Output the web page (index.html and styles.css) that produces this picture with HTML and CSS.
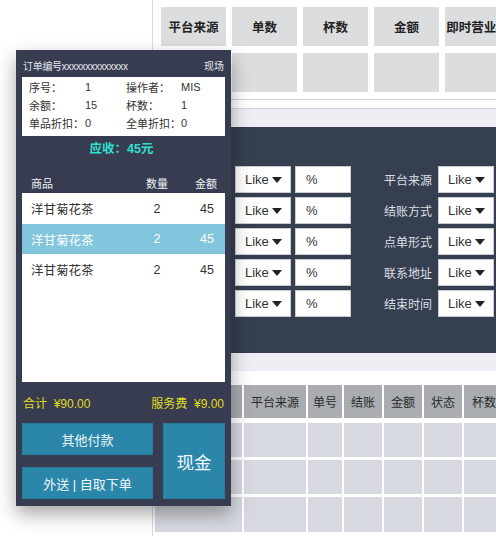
FILE: index.html
```html
<!DOCTYPE html>
<html lang="zh">
<head>
<meta charset="utf-8">
<title>收银</title>
<link rel="stylesheet" href="styles.css">
</head>
<body>
<div class="stage">
  <div class="app">
    <div class="top-table">
      <div class="th">平台来源</div>
      <div class="th">单数</div>
      <div class="th">杯数</div>
      <div class="th">金额</div>
      <div class="th">即时营业额</div>
      <div class="td"></div>
      <div class="td"></div>
      <div class="td"></div>
      <div class="td"></div>
      <div class="td"></div>
    </div>
    <div class="sep"></div>
    <div class="band"></div>
    <div class="filter">
      <div class="frow">
        <div class="sel">Like<span class="tri"></span></div>
        <div class="inp">%</div>
        <div class="flabel">平台来源</div>
        <div class="sel">Like<span class="tri"></span></div>
      </div>
      <div class="frow">
        <div class="sel">Like<span class="tri"></span></div>
        <div class="inp">%</div>
        <div class="flabel">结账方式</div>
        <div class="sel">Like<span class="tri"></span></div>
      </div>
      <div class="frow">
        <div class="sel">Like<span class="tri"></span></div>
        <div class="inp">%</div>
        <div class="flabel">点单形式</div>
        <div class="sel">Like<span class="tri"></span></div>
      </div>
      <div class="frow">
        <div class="sel">Like<span class="tri"></span></div>
        <div class="inp">%</div>
        <div class="flabel">联系地址</div>
        <div class="sel">Like<span class="tri"></span></div>
      </div>
      <div class="frow">
        <div class="sel">Like<span class="tri"></span></div>
        <div class="inp">%</div>
        <div class="flabel">结束时间</div>
        <div class="sel">Like<span class="tri"></span></div>
      </div>
    </div>
    <div class="band2"></div>
    <div class="bottom-table">
      <div class="bh"></div>
      <div class="bh">平台来源</div>
      <div class="bh">单号</div>
      <div class="bh">结账</div>
      <div class="bh">金额</div>
      <div class="bh">状态</div>
      <div class="bh">杯数</div>
      <div class="bd"></div><div class="bd"></div><div class="bd"></div><div class="bd"></div><div class="bd"></div><div class="bd"></div><div class="bd"></div>
      <div class="bd"></div><div class="bd"></div><div class="bd"></div><div class="bd"></div><div class="bd"></div><div class="bd"></div><div class="bd"></div>
      <div class="bd"></div><div class="bd"></div><div class="bd"></div><div class="bd"></div><div class="bd"></div><div class="bd"></div><div class="bd"></div>
    </div>
  </div>

  <div class="receipt">
    <div class="r-head">
      <span>订单编号xxxxxxxxxxxxxx</span>
      <span>现场</span>
    </div>
    <div class="info">
      <span>序号：</span><span>1</span><span>操作者：</span><span>MIS</span>
      <span>余额：</span><span>15</span><span>杯数：</span><span>1</span>
      <span>单品折扣：</span><span>0</span><span>全单折扣：</span><span>0</span>
    </div>
    <div class="due">应收：45元</div>
    <div class="list-head">
      <span class="c-name">商品</span>
      <span class="c-qty">数量</span>
      <span class="c-amt">金额</span>
    </div>
    <div class="list">
      <div class="item">
        <span class="c-name">洋甘菊花茶</span>
        <span class="c-qty">2</span>
        <span class="c-amt">45</span>
      </div>
      <div class="item active">
        <span class="c-name">洋甘菊花茶</span>
        <span class="c-qty">2</span>
        <span class="c-amt">45</span>
      </div>
      <div class="item">
        <span class="c-name">洋甘菊花茶</span>
        <span class="c-qty">2</span>
        <span class="c-amt">45</span>
      </div>
    </div>
    <div class="totals">
      <span>合计&nbsp;&nbsp;¥90.00</span>
      <span>服务费&nbsp;&nbsp;¥9.00</span>
    </div>
    <div class="actions">
      <div class="btn-col">
        <div class="btn">其他付款</div>
        <div class="btn">外送 | 自取下单</div>
      </div>
      <div class="btn cash">现金</div>
    </div>
  </div>
</div>
</body>
</html>
```
FILE: styles.css
```css
* { box-sizing: border-box; }
html, body {
  margin: 0;
  padding: 0;
  background: #ffffff;
}
body {
  width: 496px;
  height: 536px;
  overflow: hidden;
  font-family: "Liberation Sans", "Noto Sans CJK SC", sans-serif;
}
.stage {
  position: relative;
  width: 496px;
  height: 536px;
  overflow: hidden;
}

/* background window */
.app {
  margin-left: 152px;
  width: 360px;
  height: 536px;
  border-left: 1px solid #d9d9d9;
  background: #fff;
}
.top-table {
  display: grid;
  grid-template-columns: repeat(5, 65px);
  grid-template-rows: 39px 39px;
  column-gap: 6px;
  row-gap: 7px;
  padding: 7px 0 0 8px;
}
.th, .td {
  background: #dcdddf;
}
.th {
  display: flex;
  align-items: center;
  justify-content: center;
  font-size: 12.5px;
  font-weight: bold;
  color: #222;
  white-space: nowrap;
  overflow: hidden;
}
.sep {
  margin-top: 7px;
  height: 10px;
  border-top: 1px solid #d2d2d2;
  border-bottom: 1px solid #d4d4da;
}
.band {
  height: 18px;
  background: #eeeef4;
}
.filter {
  background: #363f4f;
  padding: 39px 0 36px 82px;
  display: flex;
  flex-direction: column;
  gap: 4px;
}
.frow {
  display: flex;
  align-items: center;
  height: 27px;
}
.sel, .inp {
  height: 27px;
  background: #fff;
  border: 1px solid #c9cbd0;
  display: flex;
  align-items: center;
  font-size: 13px;
  color: #333;
}
.sel {
  width: 56px;
  padding-left: 9px;
}
.inp {
  width: 56px;
  margin-left: 4px;
  padding-left: 10px;
}
.tri {
  display: inline-block;
  margin-left: 3px;
  width: 0;
  height: 0;
  border-left: 5px solid transparent;
  border-right: 5px solid transparent;
  border-top: 6px solid #222;
}
.flabel {
  width: 81px;
  margin-right: 6px;
  text-align: right;
  font-size: 12px;
  color: #dcdfe4;
}
.band2 {
  height: 18px;
  background: #eeeef4;
  margin-bottom: 14px;
}
.bottom-table {
  display: grid;
  grid-template-columns: 87px 62px 34px 38px 38px 38px 40px;
  grid-template-rows: 35px 34px 34px 35px;
  column-gap: 2px;
  row-gap: 3px;
  padding-left: 2px;
}
.bh {
  background: #a9adb2;
  display: flex;
  align-items: center;
  justify-content: center;
  font-size: 12px;
  color: #2a2a2a;
  margin-bottom: 2px;
  white-space: nowrap;
}
.bd {
  background: #d6d9df;
}

/* receipt overlay */
.receipt {
  position: absolute;
  left: 16px;
  top: 50px;
  width: 215px;
  height: 456px;
  background: #383c50;
  box-shadow: 0 8px 18px rgba(0, 0, 0, 0.35);
  display: flex;
  flex-direction: column;
  padding: 0 6px;
}
.r-head {
  height: 27px;
  display: flex;
  justify-content: space-between;
  align-items: flex-end;
  padding: 0 1px 3px 1px;
  font-size: 10px;
  line-height: 14px;
  color: #e6e8ee;
}
.r-head span:first-child {
  letter-spacing: -0.3px;
}
.info {
  background: #fff;
  height: 59px;
  padding: 1px 0 0 7px;
  display: grid;
  grid-template-columns: 56px 41px 55px 1fr;
  grid-auto-rows: 18px;
  align-items: center;
  font-size: 11px;
  color: #333;
}
.due {
  height: 22px;
  display: flex;
  align-items: center;
  justify-content: center;
  font-size: 12.5px;
  font-weight: bold;
  color: #2fe0cf;
  padding-right: 4px;
}
.list-head {
  height: 35px;
  display: flex;
  align-items: flex-end;
  padding-bottom: 2px;
  font-size: 11px;
  color: #f0f2f6;
}
.c-name {
  width: 115px;
  padding-left: 9px;
}
.c-qty {
  width: 40px;
  text-align: center;
}
.c-amt {
  flex: 1;
  text-align: right;
  padding-right: 9px;
}
.list-head .c-amt { padding-right: 8px; }
.list {
  background: #fff;
  height: 189px;
}
.item {
  height: 31px;
  display: flex;
  align-items: center;
  font-size: 12.5px;
  color: #333;
}
.item .c-amt { padding-right: 11px; }
.item.active {
  height: 30px;
  background: #82c6dd;
  color: #fff;
}
.totals {
  height: 41px;
  display: flex;
  justify-content: space-between;
  align-items: center;
  padding: 0 1px;
  font-size: 12px;
  color: #e0dc1e;
}
.actions {
  display: flex;
  gap: 10px;
  height: 76px;
}
.btn-col {
  width: 131px;
  display: flex;
  flex-direction: column;
  gap: 12px;
}
.btn {
  height: 32px;
  background: #2b87a9;
  border: 1px solid #267d9d;
  display: flex;
  align-items: center;
  justify-content: center;
  font-size: 13px;
  color: #eef6f9;
}
.btn.cash {
  flex: 1;
  height: 76px;
  font-size: 17.5px;
}
```
